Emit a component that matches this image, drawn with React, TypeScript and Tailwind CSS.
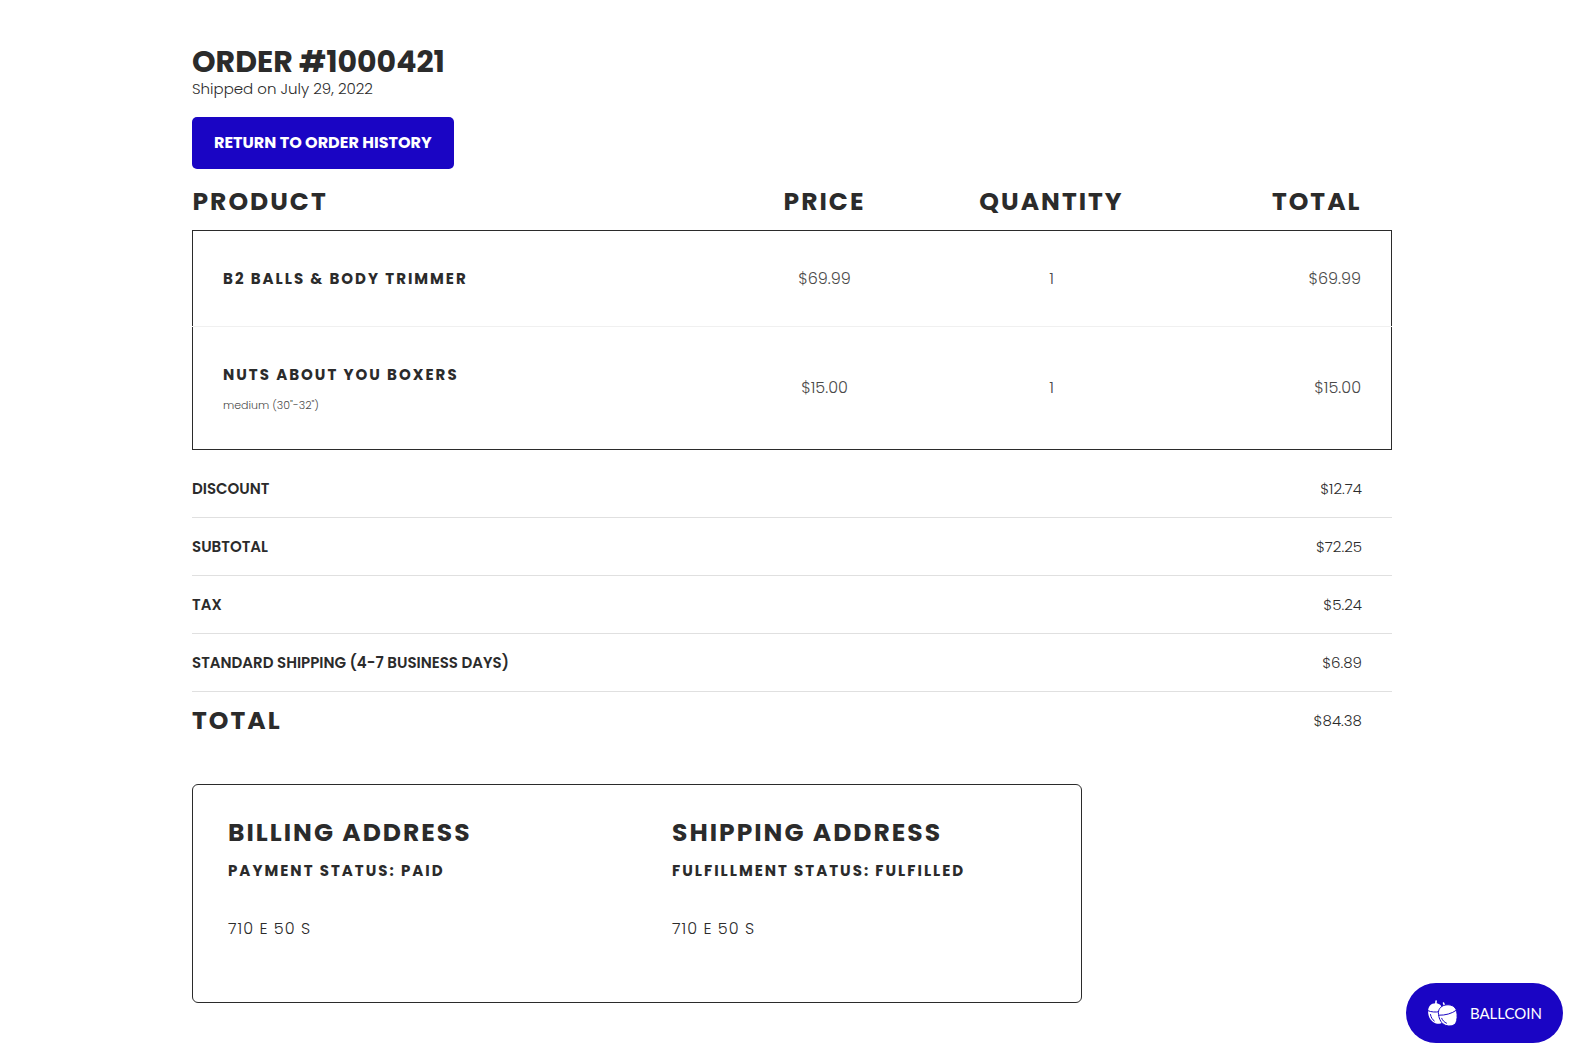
const items = [
    { name: 'B2 Balls & Body Trimmer', variant: '', price: '$69.99', quantity: 1, total: '$69.99' },
    { name: 'Nuts About You Boxers', variant: 'medium (30"-32")', price: '$15.00', quantity: 1, total: '$15.00' },
];

const charges = [
    { label: 'Discount', amount: '$12.74' },
    { label: 'Subtotal', amount: '$72.25' },
    { label: 'Tax', amount: '$5.24' },
    { label: 'Standard Shipping (4-7 business days)', amount: '$6.89' },
];

const addresses = [
    { title: 'Billing Address', status: 'Payment Status: Paid', line: '710 E 50 S' },
    { title: 'Shipping Address', status: 'Fulfillment Status: Fulfilled', line: '710 E 50 S' },
];

const AcornIcon = () => (
    <svg width="31" height="27" viewBox="0 0 30 27" fill="none" aria-hidden="true">
        {/* left acorn */}
        <path d="M8.300 4 8.600 1" stroke="#fff" strokeWidth="1.600" strokeLinecap="round" />
        <path d="M.6 12C.4 6.500 3.500 3.200 8 3.200c4 0 6.500 2 6.500 6.700v12.500c-1.500 1.600-4 1.600-6 1C3.800 21.900.8 17.500.6 12Z" fill="#fff" />
        <path d="M.3 10.600c3.500 1.500 7.500 1.800 12 1" stroke="#1a05c4" strokeWidth="1" />
        <path d="M3 14.500c.5 2.900 1.700 5 3.800 6.500" stroke="#1a05c4" strokeWidth="1" strokeLinecap="round" />
        {/* right acorn */}
        <path d="M17.200 6 16 3" stroke="#fff" strokeWidth="1.600" strokeLinecap="round" />
        <path d="M11 14.500C10.300 9.500 13 6.200 17.500 5.100c5.500-1.200 10.400 1 11.600 6 .9 4 .7 9.200-.8 12-1.800 2.800-6.300 3.600-10.300 2.200-4-1.500-6.400-6-7-10.800Z" fill="#fff" stroke="#1a05c4" strokeWidth="1" />
        <path d="M11.200 15.200c6.700.2 13-1.600 18-5.200" stroke="#1a05c4" strokeWidth="1" />
        <path d="M14.200 18.300c.9 2.200 2.500 3.900 4.800 4.900" stroke="#1a05c4" strokeWidth="1" strokeLinecap="round" />
    </svg>
);

const Items = () => (
    <table className="w-full table-fixed border-collapse">
        <thead>
            <tr className="text-[25px]/[38px] tracking-[2px] uppercase">
                <th scope="col" className="pt-3.5 pb-[9px] text-left font-bold">Product</th>
                <th scope="col" className="w-[234px] pt-3.5 pb-[9px] font-bold">Price</th>
                <th scope="col" className="w-[220px] pt-3.5 pb-[9px] font-bold">Quantity</th>
                <th scope="col" className="w-[230px] pt-3.5 pr-[30px] pb-[9px] text-right font-bold">Total</th>
            </tr>
        </thead>
        <tbody className="border border-[#2b2b2b] text-base font-light text-[#4a4a4a]">
            {items.map((item) => (
                <tr key={item.name} className="border-b border-b-[#f0f0f0] last:border-b-[#2b2b2b]">
                    <td className="pt-[36px] pb-[35px] pl-[30px]">
                        <h2 className="text-[15px]/6 font-bold tracking-[2px] text-[#2b2b2b] uppercase">{item.name}</h2>
                        {item.variant && <p className="mt-[9px] text-[11px]/[18px]">{item.variant}</p>}
                    </td>
                    <td className="text-center">{item.price}</td>
                    <td className="text-center">{item.quantity}</td>
                    <td className="pr-[30px] text-right">{item.total}</td>
                </tr>
            ))}
        </tbody>
    </table>
);

const Summary = () => (
    <table className="mt-[9px] w-full border-collapse">
        <tbody className="text-[15px]">
            {charges.map((charge) => (
                <tr key={charge.label} className="h-[58px] border-b border-[#e0e0e0]">
                    <th scope="row" className="pt-0.5 text-left font-semibold uppercase">{charge.label}</th>
                    <td className="pt-0.5 pr-[30px] text-right font-light">{charge.amount}</td>
                </tr>
            ))}
            <tr className="h-[58px]">
                <th scope="row" className="text-left text-[25px] font-bold tracking-[2px] uppercase">Total</th>
                <td className="pt-0.5 pr-[30px] text-right font-light">$84.38</td>
            </tr>
        </tbody>
    </table>
);

const App = () => {
    return (
        <div className="min-h-screen bg-white pt-11 pb-14 pl-1 font-['Poppins','Inter',sans-serif] text-[#2b2b2b]">
            <main className="mx-auto max-w-[1200px]">
                <h1 className="text-[30px]/[35px] font-bold uppercase">Order #1000421</h1>
                <p className="text-[15px]/5 font-light">Shipped on July 29, 2022</p>
                <a
                    href="#"
                    className="mt-[18px] inline-flex h-[52px] items-center rounded-[5px] bg-[#1a05c4] px-[22px] align-top text-base font-bold text-white uppercase"
                >
                    Return to order history
                </a>

                <Items />
                <Summary />

                <section className="mt-[35px] grid max-w-[890px] grid-cols-2 rounded-md border border-[#2b2b2b]">
                    {addresses.map((address) => (
                        <div key={address.title} className="px-[35px] pt-[30px] pb-[61px]">
                            <h2 className="text-[25px]/9 font-bold tracking-[2px] uppercase">{address.title}</h2>
                            <p className="mt-2 text-[15px]/6 font-bold tracking-[2px] uppercase">{address.status}</p>
                            <address className="mt-[34px] text-base/6 font-light tracking-[1px] not-italic">{address.line}</address>
                        </div>
                    ))}
                </section>
            </main>

            <button
                type="button"
                className="fixed right-[17px] bottom-4 flex h-[60px] items-center gap-3 rounded-full bg-[#1a05c4] px-[21px] font-['Lato',sans-serif] text-[15px] text-white"
            >
                <AcornIcon />
                BALLCOIN
            </button>
        </div>
    );
};

export default App;
